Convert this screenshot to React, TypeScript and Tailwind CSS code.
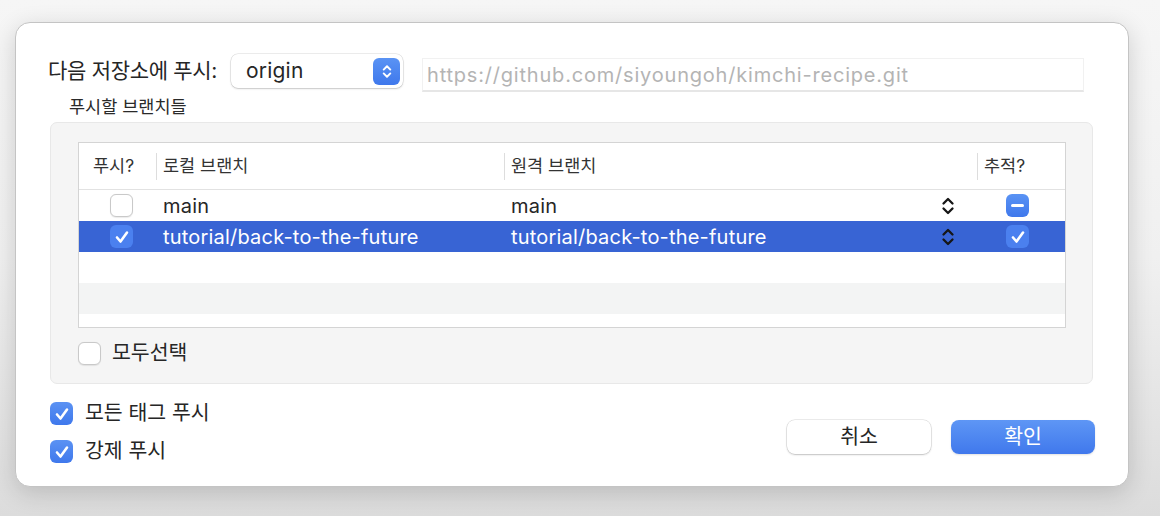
import React from 'react';

const FONT = 'font-["Inter","Noto_Sans_CJK_KR",sans-serif]';

function Check({ className = '' }: { className?: string }) {
  return (
    <svg viewBox="0 0 22 22" className={className}>
      <path d="M6 11.5 L9.5 15.5 L16 6.5" fill="none" stroke="white" strokeWidth="2.6" strokeLinecap="round" strokeLinejoin="round" />
    </svg>
  );
}

function Box({ checked, selected }: { checked?: boolean; selected?: boolean }) {
  if (checked) {
    return (
      <div
        className={`w-[23px] h-[23px] rounded-[6px] flex items-center justify-center ${
          selected ? 'bg-[#4b80ef]' : 'bg-gradient-to-b from-[#5b92f3] to-[#3f78ec]'
        }`}
      >
        <Check className="w-[22px] h-[22px]" />
      </div>
    );
  }
  return (
    <div className="w-[23px] h-[23px] rounded-[6px] bg-white border border-[#c9c9c9] shadow-[0_0.5px_1px_rgba(0,0,0,0.08)]" />
  );
}

function Stepper() {
  return (
    <svg viewBox="0 0 14 22" className="w-[14px] h-[22px]">
      <path d="M2.5 8.5 L7 4 L11.5 8.5" fill="none" stroke="#161616" strokeWidth="2.3" strokeLinecap="round" strokeLinejoin="round" />
      <path d="M2.5 13.5 L7 18 L11.5 13.5" fill="none" stroke="#161616" strokeWidth="2.3" strokeLinecap="round" strokeLinejoin="round" />
    </svg>
  );
}

const rows = [
  { push: false, local: 'main', remote: 'main', track: 'mixed', selected: false },
  { push: true, local: 'tutorial/back-to-the-future', remote: 'tutorial/back-to-the-future', track: 'checked', selected: true },
];

export default function App() {
  return (
    <div className={`w-[1160px] h-[516px] bg-gradient-to-b from-[#f6f6f6] via-[#f0f0f0] to-[#dcdcdc] pt-[22px] pl-[15px] ${FONT}`}>
      <div className="w-[1114px] h-[465px] bg-white rounded-[15px] border border-[#c4c4c4] shadow-[0_6px_24px_rgba(0,0,0,0.16)] pl-[32px] pr-[33px] pt-[31px] flex flex-col text-[#262626]">
        {/* Remote */}
        <div className="flex items-start h-[38px]">
          <div className="w-[183px] h-[34px] flex items-center text-[21px] tracking-[-0.3px]">다음 저장소에 푸시:</div>
          <div className="w-[172px] h-[34px] rounded-[7px] bg-white shadow-[0_0_0_0.5px_rgba(0,0,0,0.14),0_1px_2px_rgba(0,0,0,0.16)] flex items-center justify-between pl-[15px] pr-[3px]">
            <span className="text-[21px] tracking-[0.2px]">origin</span>
            <div className="w-[27px] h-[27px] rounded-[6px] bg-gradient-to-b from-[#5a93f4] to-[#3f78ec] flex items-center justify-center">
              <svg viewBox="0 0 12 20" className="w-[12px] h-[19px]">
                <path d="M2.5 8 L6 4.5 L9.5 8" fill="none" stroke="white" strokeWidth="2" strokeLinecap="round" strokeLinejoin="round" />
                <path d="M2.5 12 L6 15.5 L9.5 12" fill="none" stroke="white" strokeWidth="2" strokeLinecap="round" strokeLinejoin="round" />
              </svg>
            </div>
          </div>
          <div className="ml-[19px] mt-[4px] w-[662px] h-[34px] border border-[#f1f1f1] border-b-[2px] border-b-[#e6e6e6] flex items-center pl-[4px] text-[20px] tracking-[0.8px] text-[#b4b4b4]">
            https://github.com/siyoungoh/kimchi-recipe.git
          </div>
        </div>

        <div className="pl-[21px] h-[30px] flex items-center text-[17.5px] text-[#2a2a2a]">푸시할 브랜치들</div>

        {/* Group box */}
        <div className="ml-[2px] w-[1043px] h-[262px] rounded-[7px] bg-[#f5f5f5] border border-[#e8e8e8] pt-[19px] pl-[27px]">
          <div className="w-[988px] h-[186px] bg-white border border-[#d4d4d4] flex flex-col overflow-hidden">
            {/* Header */}
            <div className="h-[47px] flex items-center border-b border-[#e2e2e2] text-[17.5px] text-[#333]">
              <div className="w-[78px] h-[27px] flex items-center pl-[14px] border-r border-[#dddddd]">푸시?</div>
              <div className="w-[348px] h-[27px] flex items-center pl-[6px] border-r border-[#dddddd]">로컬 브랜치</div>
              <div className="w-[473px] h-[27px] flex items-center pl-[6px] border-r border-[#dddddd]">원격 브랜치</div>
              <div className="flex-1 h-[27px] flex items-center pl-[6px]">추적?</div>
            </div>
            {rows.map((r) => (
              <div
                key={r.local}
                className={`h-[31px] flex items-center text-[20px] tracking-[0.2px] ${r.selected ? 'bg-[#3864d4] text-white' : 'text-[#262626]'}`}
              >
                <div className="w-[78px] flex items-center pl-[31px]">
                  <Box checked={r.push} selected={r.selected} />
                </div>
                <div className="w-[348px] pl-[6px]">{r.local}</div>
                <div className="w-[473px] pl-[6px] flex items-center justify-between pr-[23px]">
                  <span>{r.remote}</span>
                  <Stepper />
                </div>
                <div className="flex-1 flex items-center pl-[28px]">
                  {r.track === 'mixed' ? (
                    <div className="w-[23px] h-[23px] rounded-[6px] bg-gradient-to-b from-[#5a93f4] to-[#3f78ec] flex items-center justify-center">
                      <div className="w-[13px] h-[3px] rounded-full bg-white" />
                    </div>
                  ) : (
                    <Box checked selected={r.selected} />
                  )}
                </div>
              </div>
            ))}
            <div className="h-[31px]" />
            <div className="h-[31px] bg-[#f3f4f4]" />
          </div>
          <div className="flex items-center mt-[14px] h-[23px]">
            <Box />
            <span className="ml-[11px] text-[20.5px]">모두선택</span>
          </div>
        </div>

        {/* Bottom */}
        <div className="flex items-start mt-[18px] ml-[2px]">
          <div className="flex flex-col gap-[15px]">
            <div className="flex items-center h-[23px]">
              <Box checked />
              <span className="ml-[12px] text-[20.5px]">모든 태그 푸시</span>
            </div>
            <div className="flex items-center h-[23px]">
              <Box checked />
              <span className="ml-[12px] text-[20.5px]">강제 푸시</span>
            </div>
          </div>
          <div className="ml-auto mt-[18px] flex gap-[20px]">
            <button className="w-[144px] h-[34px] rounded-[8px] bg-white shadow-[0_0_0_0.5px_rgba(0,0,0,0.15),0_1px_2px_rgba(0,0,0,0.18)] text-[20.5px] text-[#262626]">
              취소
            </button>
            <button className="w-[144px] h-[34px] rounded-[8px] bg-gradient-to-b from-[#5e96f5] to-[#4078ec] shadow-[0_1px_2px_rgba(0,0,0,0.12)] text-[20.5px] text-white">
              확인
            </button>
          </div>
        </div>
      </div>
    </div>
  );
}
